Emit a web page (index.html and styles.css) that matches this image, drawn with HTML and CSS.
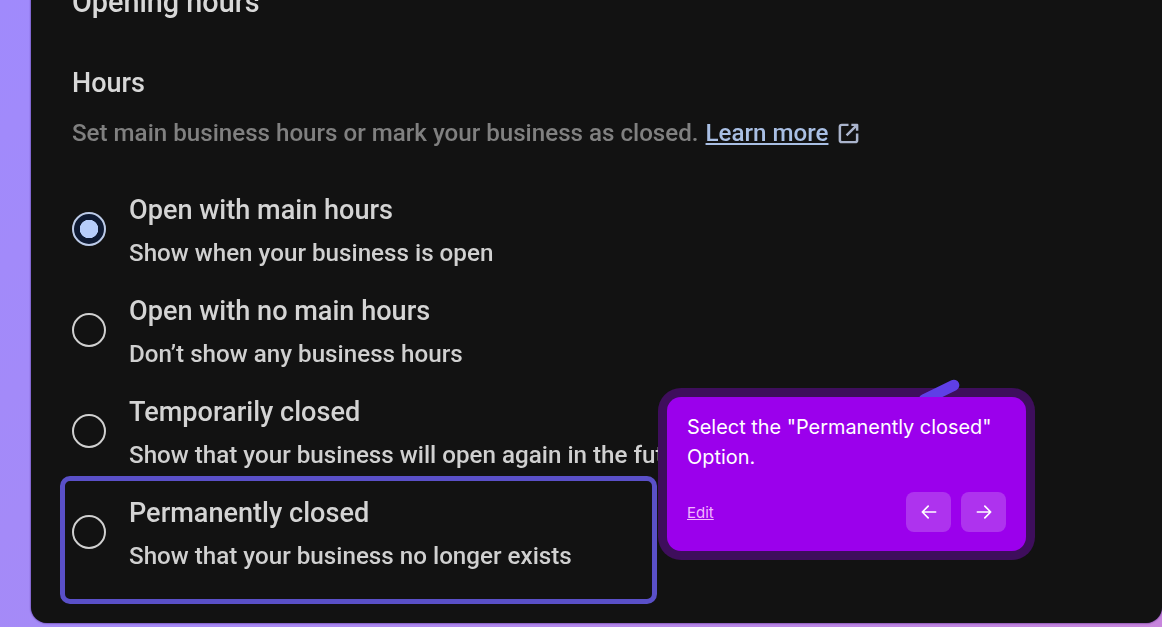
FILE: index.html
```html
<!DOCTYPE html>
<html lang="en">
<head>
    <meta charset="UTF-8">
    <title>Opening hours</title>
    <link rel="stylesheet" href="styles.css">
</head>
<body>
    <div class="panel">
        <div class="panel-content">
            <h1 class="page-title">Opening hours</h1>
            <h2 class="section-title">Hours</h2>
            <p class="section-desc">
                Set main business hours or mark your business as closed.
                <a class="learn-more" href="#">Learn more</a>
                <svg class="external-icon" viewBox="0 0 24 24" fill="none" stroke="currentColor" stroke-width="2.6" stroke-linejoin="round">
                    <path d="M12 3H5a2 2 0 0 0-2 2v14a2 2 0 0 0 2 2h14a2 2 0 0 0 2-2v-7"/>
                    <path d="M15 3h6v6M21 3 10 14"/>
                </svg>
            </p>

            <div class="options">
                <div class="option">
                    <span class="radio radio-checked"></span>
                    <div class="option-text">
                        <div class="option-title">Open with main hours</div>
                        <div class="option-sub">Show when your business is open</div>
                    </div>
                </div>
                <div class="option">
                    <span class="radio"></span>
                    <div class="option-text">
                        <div class="option-title">Open with no main hours</div>
                        <div class="option-sub">Don’t show any business hours</div>
                    </div>
                </div>
                <div class="option">
                    <span class="radio"></span>
                    <div class="option-text">
                        <div class="option-title">Temporarily closed</div>
                        <div class="option-sub">Show that your business will open again in the future</div>
                    </div>
                </div>
                <div class="option">
                    <span class="radio"></span>
                    <div class="option-text">
                        <div class="option-title">Permanently closed</div>
                        <div class="option-sub">Show that your business no longer exists</div>
                    </div>
                </div>
            </div>
        </div>
        <div class="highlight"></div>
    </div>

    <div class="tooltip-frame">
        <div class="pointer"></div>
        <div class="tooltip">
            <p class="tooltip-text">Select the "Permanently closed" Option.</p>
            <div class="tooltip-footer">
                <a class="tooltip-edit" href="#">Edit</a>
                <div class="tooltip-nav">
                    <button class="nav-btn">
                        <svg viewBox="0 0 24 24" fill="none" stroke="currentColor" stroke-width="2" stroke-linecap="round" stroke-linejoin="round">
                            <path d="M20 12H4M11 5l-7 7 7 7"/>
                        </svg>
                    </button>
                    <button class="nav-btn">
                        <svg viewBox="0 0 24 24" fill="none" stroke="currentColor" stroke-width="2" stroke-linecap="round" stroke-linejoin="round">
                            <path d="M4 12h16M13 5l7 7-7 7"/>
                        </svg>
                    </button>
                </div>
            </div>
        </div>
    </div>
</body>
</html>
```

FILE: styles.css
```css
html, body {
    height: 100%;
}

body {
    margin: 0;
    overflow: hidden;
    position: relative;
    background: linear-gradient(135deg, #a08afc 0%, #a68af6 45%, #c785dc 100%);
    font-family: Roboto, "Liberation Sans", sans-serif;
}

.panel {
    position: relative;
    box-sizing: border-box;
    height: 640px;
    margin: -17px 0 0 31px;
    background: #121212;
    border-radius: 0 0 16px 16px;
    box-shadow: 0 0 2px #2a0a5c;
    overflow: hidden;
}

.panel-content {
    padding: 0 0 0 41px;
    filter: blur(0.7px);
}

.page-title {
    margin: 0;
    height: 38px;
    font-size: 28.8px;
    line-height: 38px;
    font-weight: 500;
    color: #d8d8d8;
}

.section-title {
    margin: 46px 0 0;
    font-size: 27px;
    line-height: 32px;
    font-weight: 500;
    color: #d8d8d8;
}

.section-desc {
    display: flex;
    align-items: center;
    margin: 18px 0 0;
    font-size: 24.15px;
    line-height: 32px;
    font-weight: 500;
    color: #808080;
    white-space: nowrap;
}

.learn-more {
    margin-left: 7px;
    color: #a9bfe4;
    font-weight: 500;
    text-decoration: underline;
}

.external-icon {
    width: 23px;
    height: 23px;
    margin-left: 9px;
    color: #aab4cc;
}

.options {
    margin-top: 32px;
}

.option {
    display: flex;
    align-items: center;
    height: 101px;
}

.radio {
    box-sizing: border-box;
    flex: none;
    width: 34px;
    height: 34px;
    margin-bottom: 6px;
    border: 2.5px solid #d0d0d0;
    border-radius: 50%;
}

.radio-checked {
    border-color: #bccbe8;
    background: radial-gradient(circle, #b6cdfb 0 9px, #0e1a33 9.5px);
}

.option-text {
    margin-left: 23px;
    white-space: nowrap;
}

.option-title {
    font-size: 27.1px;
    line-height: 44px;
    font-weight: 500;
    color: #d4d4d4;
}

.option-sub {
    margin-top: -1px;
    font-size: 24.2px;
    line-height: 44px;
    font-weight: 500;
    color: #d0d0d0;
}

.highlight {
    position: absolute;
    left: 29px;
    top: 493px;
    width: 597px;
    height: 128px;
    box-sizing: border-box;
    border: 5px solid #5a50c8;
    border-radius: 10px;
}

.tooltip-frame {
    position: absolute;
    left: 658px;
    top: 388px;
    padding: 9px;
    background: #3e0e5c;
    border-radius: 23px;
}

.pointer {
    position: absolute;
    left: 259px;
    top: -1px;
    width: 44px;
    height: 11px;
    border-radius: 6px;
    background: #5f3fe6;
    transform: rotate(-26deg);
}

.tooltip {
    position: relative;
    box-sizing: border-box;
    width: 359px;
    height: 154px;
    padding: 15px 20px;
    background: #9b00ec;
    border-radius: 14px;
    font-family: Inter, "Liberation Sans", sans-serif;
    color: #fff;
}

.tooltip-text {
    margin: 0;
    font-size: 19.9px;
    line-height: 30px;
}

.tooltip-footer {
    display: flex;
    align-items: center;
    justify-content: space-between;
    margin-top: 20px;
}

.tooltip-edit {
    font-size: 15px;
    color: #f3b5ff;
    text-decoration: underline;
}

.tooltip-nav {
    display: flex;
    gap: 10px;
}

.nav-btn {
    display: flex;
    align-items: center;
    justify-content: center;
    width: 45px;
    height: 40px;
    padding: 0;
    border: 0;
    border-radius: 8px;
    background: #ae33ee;
    color: #fff;
}

.nav-btn svg {
    width: 20px;
    height: 20px;
}
```
